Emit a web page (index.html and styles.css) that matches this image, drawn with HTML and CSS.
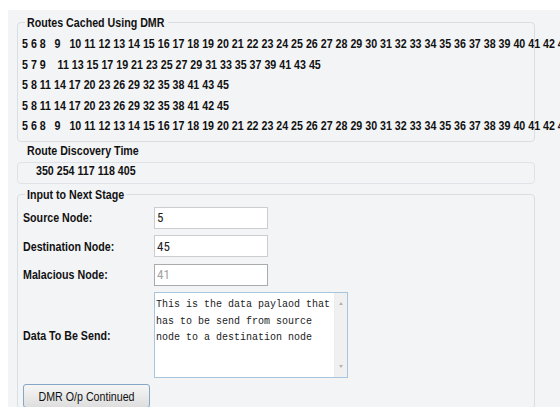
FILE: index.html
```html
<!DOCTYPE html>
<html>
<head>
<meta charset="utf-8">
<title>DMR Routes</title>
<link rel="stylesheet" href="styles.css">
</head>
<body>
<div class="panel">
  <fieldset class="group routes">
    <legend class="legend-routes"><span class="narrow">Routes Cached Using DMR</span></legend>
    <div class="route">5 6 8   9   10 11 12 13 14 15 16 17 18 19 20 21 22 23 24 25 26 27 28 29 30 31 32 33 34 35 36 37 38 39 40 41 42 43 44 45</div>
    <div class="route">5 7 9    11 13 15 17 19 21 23 25 27 29 31 33 35 37 39 41 43 45</div>
    <div class="route">5 8 11 14 17 20 23 26 29 32 35 38 41 43 45</div>
    <div class="route">5 8 11 14 17 20 23 26 29 32 35 38 41 42 45</div>
    <div class="route">5 6 8   9   10 11 12 13 14 15 16 17 18 19 20 21 22 23 24 25 26 27 28 29 30 31 32 33 34 35 36 37 38 39 40 41 42 43 44 45</div>
  </fieldset>

  <div class="caption"><span class="narrow">Route Discovery Time</span></div>
  <div class="timebox"><span class="narrow">350 254 117 118 405</span></div>

  <fieldset class="group stage">
    <legend class="legend-stage"><span class="narrow">Input to Next Stage</span></legend>
    <div class="form">
      <label class="lbl" for="src">Source Node:</label>
      <input class="field" id="src" type="text" value="5">
      <label class="lbl" for="dst">Destination Node:</label>
      <input class="field" id="dst" type="text" value="45">
      <label class="lbl" for="mal">Malacious Node:</label>
      <input class="field" id="mal" type="text" value="41" disabled>
      <label class="lbl" for="data">Data To Be Send:</label>
      <div class="payload-box">
        <textarea class="payload" id="data">This is the data paylaod that has to be send from source node to a destination node</textarea>
        <div class="vscroll">
          <span class="arrow up"></span>
          <span class="arrow down"></span>
        </div>
      </div>
    </div>
    <button class="btn" type="button"><span class="btn-text">DMR O/p Continued</span></button>
  </fieldset>
</div>
</body>
</html>
```

FILE: styles.css
```css
html, body {
  margin: 0;
  padding: 0;
  background: #ffffff;
  overflow: hidden;
}

body {
  font-family: "Liberation Sans", Arial, sans-serif;
  font-size: 13px;
  color: #111;
}

/* Arial Narrow look: regular sans squeezed horizontally */
.narrow {
  display: inline-block;
  transform: scaleX(0.82);
  transform-origin: 0 50%;
  white-space: nowrap;
}

.panel {
  margin: 10px 0 0 8px;
  padding: 4px 25px 40px 9px;
  background: #f3f4f6;
  min-height: 420px;
}

.group {
  margin: 0;
  border: 1px solid #d9dee3;
  border-radius: 4px;
  min-width: 0;
}

.group legend {
  box-sizing: border-box;
  padding: 2px 2px 0;
  font-weight: bold;
  line-height: 14px;
  white-space: nowrap;
}

.legend-routes {
  width: 143px;
  margin-left: 3px;
}

.legend-stage {
  width: 101px;
  margin-left: 2px;
  padding-top: 0 !important;
}

.routes {
  padding: 4px 0 4px 4px;
}

.route {
  font-weight: bold;
  line-height: 20.5px;
  white-space: pre;
  transform: scaleX(0.82);
  transform-origin: 0 50%;
}

.caption {
  margin-top: 2px;
  padding-left: 10px;
  font-weight: bold;
  line-height: 14px;
}

.timebox {
  margin-top: 4px;
  height: 20px;
  padding-left: 18px;
  border: 1px solid #dfe3e7;
  border-radius: 4px;
  font-weight: bold;
  line-height: 15px;
}

.stage {
  margin-top: 4px;
  padding: 5px 0 0 5px;
}

.form {
  display: grid;
  grid-template-columns: 131px 114px;
  row-gap: 6.5px;
  align-items: center;
}

.lbl {
  font-weight: bold;
  white-space: nowrap;
  transform: scaleX(0.82);
  transform-origin: 0 50%;
}

.field {
  box-sizing: border-box;
  width: 114px;
  height: 22px;
  margin: 0;
  padding: 0 2px;
  border: 1px solid #cbcdcf;
  background: #fff;
  font-family: Roboto, sans-serif;
  font-stretch: 75%;
  font-size: 13px;
  color: #222;
}

.field:disabled {
  color: #a3a3a3;
  border-color: #a9abad;
  background: #fff;
}

/* multi-line payload with its own scrollbar strip */
.payload-box {
  box-sizing: border-box;
  display: flex;
  width: 194px;
  height: 86px;
  border: 1px solid #a9c5de;
  background: #fff;
}

.payload {
  flex: 1;
  min-width: 0;
  box-sizing: border-box;
  height: 100%;
  margin: 0;
  padding: 4px 1px 2px;
  border: 0;
  outline: none;
  background: #fff;
  font-family: "Liberation Mono", monospace;
  font-size: 10px;
  line-height: 16.5px;
  color: #222;
  resize: none;
  overflow: hidden;
}

.vscroll {
  width: 12px;
  display: flex;
  flex-direction: column;
  justify-content: space-between;
  align-items: center;
  padding: 9px 0 9px;
  background: #f0f0f0;
  border-left: 1px solid #ececec;
}

.arrow {
  width: 0;
  height: 0;
  border-left: 2.5px solid transparent;
  border-right: 2.5px solid transparent;
}

.arrow.up {
  border-bottom: 3px solid #b4b4b4;
}

.arrow.down {
  border-top: 3px solid #b4b4b4;
}

.btn {
  display: block;
  box-sizing: border-box;
  margin: 6px 0 0 0;
  width: 127px;
  height: 24px;
  padding: 0;
  border: 1px solid #86a6c6;
  border-radius: 3px;
  background: linear-gradient(#f6f6f6, #dedede);
  font-family: inherit;
  font-size: 13px;
  color: #111;
}

.btn-text {
  display: inline-block;
  transform: scaleX(0.82);
  white-space: nowrap;
}
```
